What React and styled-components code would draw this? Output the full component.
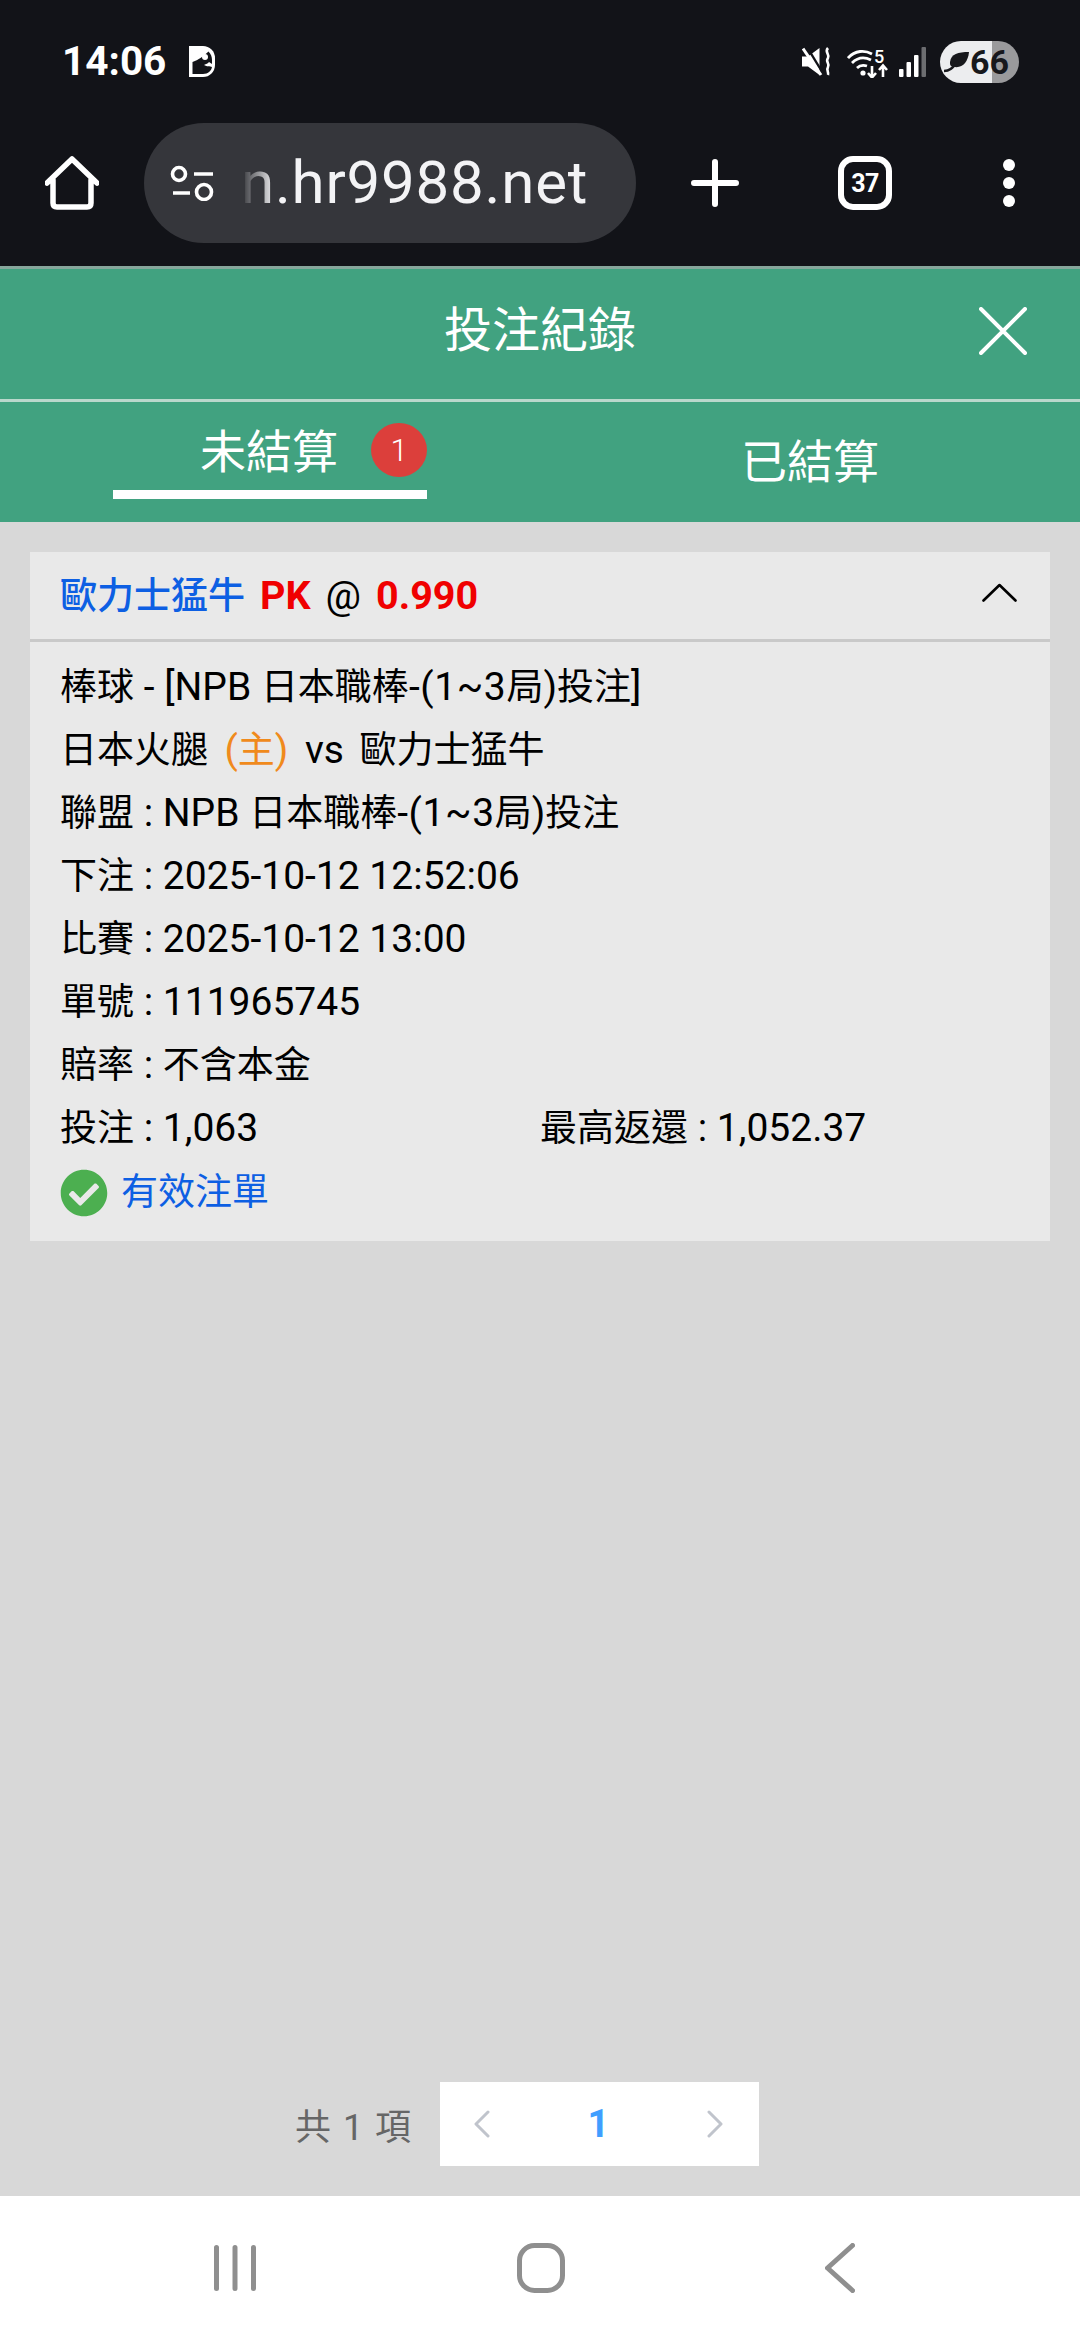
import React from "react";
import styled, { createGlobalStyle } from "styled-components";
import { FaCheckCircle } from "react-icons/fa";

const Global = createGlobalStyle`
  html, body { margin: 0; padding: 0; background: #d8d8d8; }
  * { box-sizing: border-box; }
  body { font-family: Roboto, "Noto Sans CJK TC", sans-serif; }
`;

const Page = styled.div`
  width: 1080px;
  height: 2340px;
  display: flex;
  flex-direction: column;
  background: #d8d8d8;
  overflow: hidden;
`;
const Chrome = styled.header`
  height: 266px;
  background: #121318;
  display: flex;
  flex-direction: column;
  flex: none;
`;
const StatusBar = styled.div`
  height: 123px;
  display: flex;
  align-items: center;
  padding: 0 61px 0 62px;
  color: #fff;
`;
const Time = styled.span`
  font-size: 40.5px;
  font-weight: 700;
  line-height: 1;
  width: 127px;
`;
const StatusRight = styled.div`
  margin-left: auto;
  display: flex;
  align-items: center;
`;
const Battery = styled.div`
  width: 79px;
  height: 42px;
  margin-left: 14px;
  border-radius: 21px;
  background: linear-gradient(to right, #ecedef 0 52px, #9a9a9c 52px);
  display: flex;
  align-items: center;
  justify-content: flex-end;
  padding-right: 10px;
  color: #17181c;
  font-size: 34px;
  font-weight: 700;
  position: relative;
`;
const Leaf = styled.svg`
  position: absolute;
  left: 4px;
  top: 10px;
`;
const Toolbar = styled.div`
  height: 120px;
  display: flex;
  align-items: center;
  color: #fff;
`;
const HomeSlot = styled.div`
  width: 144px;
  padding-left: 45px;
  display: flex;
`;
const UrlPill = styled.div`
  width: 492px;
  height: 120px;
  border-radius: 60px;
  background: #35363b;
  display: flex;
  align-items: center;
  padding-left: 26px;
`;
const UrlText = styled.span`
  margin-left: 26px;
  font-size: 60px;
  line-height: 1;
  font-weight: 400;
  color: #f3f3f5;
  letter-spacing: 0.8px;
  -webkit-mask-image: linear-gradient(to right, transparent 0, #000 34px);
  mask-image: linear-gradient(to right, transparent 0, #000 34px);
`;
const ToolIcons = styled.div`
  flex: 1;
  display: flex;
  align-items: center;
  padding-left: 55px;
`;
const TabCount = styled.div`
  width: 54px;
  height: 54px;
  margin-left: 99px;
  border: 6px solid #fff;
  border-radius: 15px;
  display: flex;
  align-items: center;
  justify-content: center;
  font-size: 25px;
  font-weight: 700;
  letter-spacing: -0.5px;
`;
const MenuDots = styled.div`
  margin-left: 111px;
  display: flex;
  flex-direction: column;
  gap: 6px;
`;
const Dot = styled.i`
  display: block;
  width: 12px;
  height: 12px;
  border-radius: 50%;
  background: #fff;
`;
const TitleBar = styled.div`
  height: 136px;
  flex: none;
  background: #41a280;
  border-top: 3px solid #86a69b;
  border-bottom: 3px solid #b9d8cc;
  display: grid;
  grid-template-columns: 1fr auto 1fr;
  align-items: center;
  color: #fff;
`;
const Title = styled.h1`
  grid-column: 2;
  margin: 0 0 6px;
  font-size: 48px;
  font-weight: 400;
  line-height: 1.2;
`;
const CloseBtn = styled.div`
  justify-self: end;
  padding-right: 53px;
  display: flex;
  margin-bottom: 6px;
`;
const Tabs = styled.nav`
  height: 120px;
  flex: none;
  background: #41a280;
  display: grid;
  grid-template-columns: 1fr 1fr;
  color: #fff;
`;
const Tab = styled.div`
  display: flex;
  justify-content: center;
  align-items: ${(p) => (p.$active ? "flex-start" : "center")};
  padding-top: ${(p) => (p.$active ? "14px" : "2px")};
`;
const ActiveLabel = styled.div`
  width: 314px;
  height: 74px;
  box-sizing: content-box;
  border-bottom: 9px solid #fff;
  display: flex;
  align-items: center;
  justify-content: flex-end;
  gap: 33px;
`;
const TabText = styled.span`
  font-size: 46px;
  line-height: 1.2;
`;
const Badge = styled.span`
  width: 56px;
  height: 54px;
  border-radius: 50%;
  background: #dc3f3b;
  font-size: 31px;
  font-weight: 300;
  display: flex;
  align-items: center;
  justify-content: center;
  margin-bottom: 6px;
`;
const Content = styled.main`
  flex: 1;
  padding: 30px 30px 0;
  display: flex;
  flex-direction: column;
`;
const Card = styled.section`
  background: #e9e9e9;
  color: #000;
`;
const CardHead = styled.div`
  height: 90px;
  border-bottom: 3px solid #c9c9c9;
  padding: 0 33px 6px 30px;
  display: flex;
  align-items: center;
  justify-content: space-between;
  font-size: 39.5px;
`;
const Pick = styled.span`
  color: #0d5fe3;
  font-weight: 500;
  font-size: 37px;
  margin-right: 15px;
`;
const Red = styled.span`
  color: #f00000;
  font-weight: 700;
`;
const Plain = styled.span`
  margin: 0 15px;
`;
const CardBody = styled.div`
  padding: 14px 30px 17px;
  font-size: 39px;
  line-height: 63px;
`;
const Zh = styled.span`
  font-size: 37px;
`;
const Range = styled.span`
  letter-spacing: 0.6px;
`;
const Row = styled.div`
  white-space: nowrap;
`;
const HomeTag = styled.span`
  color: #f08a1c;
  margin: 0 9.5px 0 16.5px;
`;
const Vs = styled.span`
  margin: 0 15.5px 0 7px;
`;
const TwoCol = styled.div`
  display: grid;
  grid-template-columns: 480px 1fr;
  white-space: nowrap;
`;
const Valid = styled.div`
  display: flex;
  align-items: center;
  gap: 13px;
  height: 63px;
  margin-top: 1px;
  color: #0d5fe3;
  svg { color: #4caf50; }
`;
const Footer = styled.div`
  height: 114px;
  margin-top: auto;
  margin-left: -30px;
  margin-right: -30px;
  padding: 0 0 30px 295px;
  display: flex;
  align-items: center;
  flex: none;
`;
const Total = styled.span`
  width: 145px;
  font-size: 36px;
  color: #666;
  word-spacing: 3px;
`;
const Pager = styled.div`
  width: 319px;
  height: 84px;
  background: #fff;
  display: flex;
  align-items: center;
  justify-content: space-between;
  padding: 0 36px 0 34px;
`;
const PageNum = styled.span`
  color: #409eff;
  font-size: 38px;
  font-weight: 700;
`;
const NavBar = styled.footer`
  height: 144px;
  flex: none;
  background: #fff;
  display: flex;
  align-items: center;
  justify-content: space-between;
  padding: 0 225px 0 214px;
`;

const Stroke = styled.svg`
  display: block;
  flex: none;
  fill: none;
  stroke: currentColor;
  stroke-linecap: round;
  stroke-linejoin: round;
`;
const Fill = styled.svg`
  display: block;
  flex: none;
  margin-right: ${(p) => p.$mr || 0}px;
`;

export default function App() {
  return (
    <Page>
      <Global />
      <Chrome>
        <StatusBar>
          <Time>14:06</Time>
          <Fill width="26" height="31" viewBox="0 0 26 31">
            <path d="M0 0 H14 A12 12 0 0 1 26 12 V19 A12 12 0 0 1 14 31 H0 Z" fill="#fff" />
            <path d="M3.5 16 C9 14 15 10 19.5 5.5 C22 8 23 11 23 14 V20 C23 24.5 19 28 14 28 H3.5 Z" fill="#121318" />
            <circle cx="16" cy="11" r="3" fill="#fff" />
            <path d="M15 19 C17 18 19 17.5 20 16 L23 18 V21 C21 20 18 21 15 19Z" fill="#fff" />
          </Fill>
          <StatusRight>
            <Fill width="29" height="29" viewBox="0 0 29 29" $mr={16}>
              <path d="M0 9.5 H6 L17.5 1 V28 L6 19.5 H0 Z" fill="#fff" />
              <path d="M5 0 L22 28" stroke="#121318" strokeWidth="2.4" />
              <path d="M1 1.5 L19 28" stroke="#fff" strokeWidth="3" />
              <path d="M26 1 C22 5 28 7 26 11 C23 15 28 16 26 20 C24 23 27 25 26 28" stroke="#fff" strokeWidth="2.6" fill="none" />
            </Fill>
            <Fill width="42" height="32" viewBox="0 0 42 32" $mr={10}>
              <g transform="translate(0 2)">
                <path d="M1 10 C8 2 18 2 25 6" stroke="#fff" strokeWidth="2.8" fill="none" />
                <path d="M5 15 C11 9 18 9 24 12" stroke="#fff" strokeWidth="2.8" fill="none" />
                <path d="M10 20 C13 17 17 17 20 18" stroke="#fff" strokeWidth="2.8" fill="none" />
                <circle cx="16" cy="25" r="2.6" fill="#fff" />
              </g>
              <path d="M25 20 V31 M21 27 L25 31.5 L29 27" stroke="#fff" strokeWidth="2.6" fill="none" />
              <path d="M36 31 V20 M32 24 L36 19.5 L40 24" stroke="#fff" strokeWidth="2.6" fill="none" />
              <text x="27" y="17" fill="#fff" fontSize="18" fontFamily="Roboto" fontWeight="500">5</text>
            </Fill>
            <Fill width="27" height="30" viewBox="0 0 27 30">
              <rect x="0" y="22" width="4.5" height="8" rx="1" fill="#fff" />
              <rect x="7.5" y="15" width="4.5" height="15" rx="1" fill="#fff" />
              <rect x="15" y="8" width="4.5" height="22" rx="1" fill="#fff" />
              <rect x="22.5" y="0" width="4.5" height="30" rx="1" fill="#6c6d70" />
            </Fill>
            <Battery>
              <Leaf width="25" height="22" viewBox="0 0 25 22">
                <path d="M25 1 C14 1 7 3 6 11 C6 13 6 14 7 15 C17 19 24 12 25 1Z" fill="#17181c" />
                <path d="M0 20 C5 20 8 18 14 10" stroke="#17181c" strokeWidth="2.6" fill="none" />
              </Leaf>
              66
            </Battery>
          </StatusRight>
        </StatusBar>
        <Toolbar>
          <HomeSlot>
            <Stroke width="54" height="54" viewBox="0 0 54 54" strokeWidth="5.5" color="#fff">
              <path d="M2 27 L27 3 L52 27 M8 24 V47 Q8 51 12 51 H42 Q46 51 46 47 V24" />
            </Stroke>
          </HomeSlot>
          <UrlPill>
            <Stroke width="45" height="36" viewBox="0 0 45 36" strokeWidth="3.6" color="#fff">
              <circle cx="9" cy="9" r="6.5" />
              <circle cx="34" cy="27" r="7.5" />
              <path d="M24 9 H43 M3 28 H20" strokeLinecap="butt" />
            </Stroke>
            <UrlText>n.hr9988.net</UrlText>
          </UrlPill>
          <ToolIcons>
            <Stroke width="48" height="48" viewBox="0 0 48 48" strokeWidth="6" color="#fff">
              <path d="M24 3 V45 M3 24 H45" />
            </Stroke>
            <TabCount>37</TabCount>
            <MenuDots>
              <Dot />
              <Dot />
              <Dot />
            </MenuDots>
          </ToolIcons>
        </Toolbar>
      </Chrome>
      <TitleBar>
        <Title>投注紀錄</Title>
        <CloseBtn>
          <Stroke width="48" height="48" viewBox="0 0 48 48" strokeWidth="4" color="#fff">
            <path d="M2 2 L46 46 M46 2 L2 46" />
          </Stroke>
        </CloseBtn>
      </TitleBar>
      <Tabs>
        <Tab $active>
          <ActiveLabel>
            <TabText>未結算</TabText>
            <Badge>1</Badge>
          </ActiveLabel>
        </Tab>
        <Tab>
          <TabText>已結算</TabText>
        </Tab>
      </Tabs>
      <Content>
        <Card>
          <CardHead>
            <div>
              <Pick>歐力士猛牛</Pick>
              <Red>PK</Red>
              <Plain>@</Plain>
              <Red>0.990</Red>
            </div>
            <Stroke width="35" height="19" viewBox="0 0 35 19" strokeWidth="2.6" color="#000">
              <path d="M1.5 17.5 L17.5 2 L33.5 17.5" />
            </Stroke>
          </CardHead>
          <CardBody>
            <Row><Zh>棒球</Zh> - [NPB <Zh>日本職棒</Zh><Range>-(1~3</Range><Zh>局</Zh>)<Zh>投注</Zh>]</Row>
            <Row>
              <Zh>日本火腿</Zh>
              <HomeTag>(<Zh>主</Zh>)</HomeTag>
              <Vs>vs</Vs>
              <Zh>歐力士猛牛</Zh>
            </Row>
            <Row><Zh>聯盟</Zh> : NPB <Zh>日本職棒</Zh><Range>-(1~3</Range><Zh>局</Zh>)<Zh>投注</Zh></Row>
            <Row><Zh>下注</Zh> : 2025-10-12 12:52:06</Row>
            <Row><Zh>比賽</Zh> : 2025-10-12 13:00</Row>
            <Row><Zh>單號</Zh> : 111965745</Row>
            <Row><Zh>賠率</Zh> : <Zh>不含本金</Zh></Row>
            <TwoCol>
              <span><Zh>投注</Zh> : 1,063</span>
              <span><Zh>最高返還</Zh> : 1,052.37</span>
            </TwoCol>
            <Valid>
              <FaCheckCircle size={48} />
              <Zh>有效注單</Zh>
            </Valid>
          </CardBody>
        </Card>
        <Footer>
          <Total>共 1 項</Total>
          <Pager>
            <Stroke width="16" height="28" viewBox="0 0 16 28" strokeWidth="3" color="#c0c4cc">
              <path d="M14 2 L2 14 L14 26" />
            </Stroke>
            <PageNum>1</PageNum>
            <Stroke width="16" height="28" viewBox="0 0 16 28" strokeWidth="3" color="#c0c4cc">
              <path d="M2 2 L14 14 L2 26" />
            </Stroke>
          </Pager>
        </Footer>
      </Content>
      <NavBar>
        <Stroke width="42" height="46" viewBox="0 0 42 46" strokeWidth="5" color="#8f8f8f">
          <path d="M2.5 2.5 V43.5 M21 2.5 V43.5 M39.5 2.5 V43.5" />
        </Stroke>
        <Stroke width="48" height="50" viewBox="0 0 48 50" strokeWidth="5" color="#8f8f8f">
          <rect x="2.5" y="2.5" width="43" height="45" rx="15" />
        </Stroke>
        <Stroke width="30" height="50" viewBox="0 0 30 50" strokeWidth="5" color="#8f8f8f">
          <path d="M27.5 2.5 L2.5 25 L27.5 47.5" />
        </Stroke>
      </NavBar>
    </Page>
  );
}
